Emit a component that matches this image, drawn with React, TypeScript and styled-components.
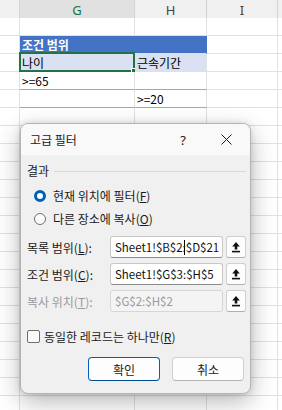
import React from 'react'
import styled, {createGlobalStyle} from 'styled-components'

const GlobalStyle = createGlobalStyle`
  html, body {
    margin: 0;
    padding: 0;
    background: #ffffff;
  }
  body {
    width: 282px;
    height: 410px;
    overflow: hidden;
    position: relative;
    font-family: "Noto Sans CJK KR", "Noto Sans", sans-serif;
  }
`

const HEADERS = ['', 'G', 'H', 'I', '']

type CellData = {
    text?: string
    bg?: string
    color?: string
    bold?: boolean
    line?: string
    span?: number
    selected?: boolean
}

// rows of the sheet, F..J, only the ones that hold something
const ROWS: CellData[][] = [
    [{}, {}, {}, {}, {}],
    [{}, {text: '조건 범위', bg: '#4472c4', color: '#ffffff', bold: true, span: 2}, {}, {}],
    [{}, {text: '나이', bg: '#d9e1f2', selected: true}, {text: '근속기간', bg: '#d9e1f2'}, {}, {}],
    [{}, {text: '>=65', line: '#8eaadb'}, {line: '#8eaadb'}, {}, {}],
    [{}, {line: '#8eaadb'}, {text: '>=20', line: '#8eaadb'}, {}, {}],
]

const EMPTY_ROWS = 17

const ArrowUpIcon = () => (
    <svg width="10" height="12" viewBox="0 0 10 12">
        <path d="M5 1 L1.2 5.4 H3.7 V8.6 H6.3 V5.4 H8.8 Z" fill="#111"/>
        <rect x="1" y="9.8" width="8" height="1.6" fill="#111"/>
    </svg>
)

const CloseIcon = () => (
    <svg width="11" height="11" viewBox="0 0 11 11">
        <path d="M0.5 0.5 L10.5 10.5 M10.5 0.5 L0.5 10.5" stroke="#1a1a1a" strokeWidth="1"/>
    </svg>
)

const RangeField = ({label, mnemonic, value, disabled, caret}: {
    label: string, mnemonic: string, value: string, disabled?: boolean, caret?: boolean
}) => {
    const cut = caret ? value.indexOf(':') : -1
    return (
        <FieldRow>
            <Label $disabled={disabled}>
                {label}(<u>{mnemonic}</u>):
            </Label>
            <Input $disabled={disabled}>
                {cut >= 0 ? (
                    <>
                        {value.slice(0, cut)}
                        <Caret/>
                        {value.slice(cut)}
                    </>
                ) : value}
            </Input>
            <PickButton>
                <ArrowUpIcon/>
            </PickButton>
        </FieldRow>
    )
}

const App = () => {
    return (
        <>
            <GlobalStyle/>
            <Sheet>
                {HEADERS.map((h, i) => (
                    <HeaderCell key={'h' + i} $active={h === 'G'}>{h}</HeaderCell>
                ))}
                {ROWS.map((row, r) =>
                    row.map((c, i) => (
                        <Cell
                            key={r + '-' + i}
                            $bg={c.bg}
                            $color={c.color}
                            $bold={c.bold}
                            $line={c.line}
                            $span={c.span || 1}
                        >
                            {c.text}
                            {c.selected && (
                                <Selection>
                                    <Handle/>
                                </Selection>
                            )}
                        </Cell>
                    ))
                )}
                {Array.from({length: EMPTY_ROWS * 5}).map((_, i) => (
                    <Cell key={'e' + i} $span={1}/>
                ))}
            </Sheet>

            <Dialog>
                <TitleBar>
                    <Title>고급 필터</Title>
                    <Help>?</Help>
                    <Close><CloseIcon/></Close>
                </TitleBar>
                <Body>
                    <GroupHead>
                        <span>결과</span>
                        <GroupLine/>
                    </GroupHead>
                    <RadioList>
                        <RadioRow>
                            <Radio $checked/>
                            <span>현재 위치에 필터(<u>F</u>)</span>
                        </RadioRow>
                        <RadioRow>
                            <Radio/>
                            <span>다른 장소에 복사(<u>O</u>)</span>
                        </RadioRow>
                    </RadioList>
                    <Fields>
                        <RangeField label="목록 범위" mnemonic="L" value="Sheet1!$B$2:$D$21" caret/>
                        <RangeField label="조건 범위" mnemonic="C" value="Sheet1!$G$3:$H$5"/>
                        <RangeField label="복사 위치" mnemonic="T" value="$G$2:$H$2" disabled/>
                    </Fields>
                    <CheckRow>
                        <CheckBox/>
                        <span>동일한 레코드는 하나만(<u>R</u>)</span>
                    </CheckRow>
                    <Footer>
                        <Button $primary>확인</Button>
                        <Button>취소</Button>
                    </Footer>
                </Body>
            </Dialog>
        </>
    )
}

const Sheet = styled.div`
  display: grid;
  grid-template-columns: 20px 115px 72px 71px 1fr;
  grid-auto-rows: 18px;
  width: 282px;
  height: 410px;
  overflow: hidden;
  font-family: "Noto Sans CJK KR", "Noto Sans", sans-serif;
`

const HeaderCell = styled.div<{ $active?: boolean }>`
  box-sizing: border-box;
  height: 23px;
  display: flex;
  align-items: center;
  justify-content: center;
  padding-bottom: 2px;
  font-family: "Noto Sans", "Noto Sans CJK KR", sans-serif;
  font-size: 13px;
  color: ${p => p.$active ? '#1e7145' : '#444444'};
  background: ${p => p.$active ? '#e1e1e1' : '#f0f0f0'};
  border-right: 1px solid #d4d4d4;
  border-bottom: ${p => p.$active ? '2px solid #217346' : '1px solid #d4d4d4'};
`

const Cell = styled.div<{ $bg?: string, $color?: string, $bold?: boolean, $line?: string, $span: number }>`
  position: relative;
  box-sizing: border-box;
  grid-column: span ${p => p.$span};
  height: 18px;
  display: flex;
  align-items: center;
  padding: 0 2px;
  font-size: 12px;
  line-height: 17px;
  white-space: nowrap;
  font-weight: ${p => p.$bold ? 700 : 400};
  color: ${p => p.$color || '#000000'};
  background: ${p => p.$bg || '#ffffff'};
  border-right: 1px solid ${p => p.$bg && p.$span > 1 ? p.$bg : '#e1e1e1'};
  border-bottom: 1px solid ${p => p.$line || '#e1e1e1'};
`

const Selection = styled.div`
  position: absolute;
  left: -1px;
  top: -2px;
  right: -1px;
  bottom: -1px;
  border: 2px solid #217346;
  pointer-events: none;
`

const Handle = styled.div`
  position: absolute;
  right: -5px;
  bottom: -5px;
  width: 5px;
  height: 5px;
  background: #217346;
  border: 1px solid #ffffff;
`

const Dialog = styled.div`
  position: absolute;
  left: 20px;
  top: 123px;
  width: 231px;
  height: 271px;
  box-sizing: border-box;
  display: flex;
  flex-direction: column;
  border: 1px solid #b4b4b4;
  border-radius: 8px;
  overflow: hidden;
  background: #f0f0f0;
  box-shadow: 0 8px 24px rgba(0, 0, 0, 0.28), 0 0 6px rgba(0, 0, 0, 0.12);
  font-size: 12px;
  color: #1a1a1a;
`

const TitleBar = styled.div`
  height: 31px;
  flex-shrink: 0;
  display: flex;
  align-items: center;
  padding-left: 9px;
  background: #f9f9f9;
`

const Title = styled.div`
  flex: 1;
  font-size: 12px;
`

const Help = styled.div`
  width: 12px;
  text-align: center;
  font-family: "Noto Sans", sans-serif;
  font-size: 13px;
  margin-right: 32px;
`

const Close = styled.div`
  width: 11px;
  height: 11px;
  display: flex;
  margin-right: 18px;
`

const Body = styled.div`
  flex: 1;
  padding: 8px 6px 0 6px;
  display: flex;
  flex-direction: column;
`

const GroupHead = styled.div`
  height: 16px;
  display: flex;
  align-items: center;
  gap: 5px;
  line-height: 16px;
`

const GroupLine = styled.div`
  flex: 1;
  height: 1px;
  margin-right: -2px;
  background: #d9d9d9;
`

const RadioList = styled.div`
  margin-top: 5px;
  padding-left: 7px;
  display: flex;
  flex-direction: column;
`

const RadioRow = styled.div`
  height: 23px;
  display: flex;
  align-items: center;
  gap: 7px;
`

const Radio = styled.div<{ $checked?: boolean }>`
  box-sizing: border-box;
  width: 12px;
  height: 12px;
  border-radius: 50%;
  background: ${p => p.$checked ? '#ffffff' : '#fbfbfb'};
  border: ${p => p.$checked ? '3.5px solid #005fb8' : '1px solid #707070'};
`

const Fields = styled.div`
  margin-top: 6px;
  display: flex;
  flex-direction: column;
  gap: 5px;
`

const FieldRow = styled.div`
  display: grid;
  grid-template-columns: 80px 113px 20px;
  column-gap: 3px;
  height: 22px;
  align-items: center;
`

const Label = styled.div<{ $disabled?: boolean }>`
  white-space: nowrap;
  color: ${p => p.$disabled ? '#9a9a9a' : '#1a1a1a'};
`

const Input = styled.div<{ $disabled?: boolean }>`
  box-sizing: border-box;
  height: 22px;
  padding: 0 4px;
  display: flex;
  align-items: center;
  overflow: hidden;
  white-space: nowrap;
  font-size: 11.5px;
  border-radius: 3px;
  color: ${p => p.$disabled ? '#9a9a9a' : '#111111'};
  background: ${p => p.$disabled ? '#f4f4f4' : '#ffffff'};
  border: 1px solid ${p => p.$disabled ? '#d6d6d6' : '#c8c8c8'};
  border-bottom-color: ${p => p.$disabled ? '#d6d6d6' : '#8a8a8a'};
`

const Caret = styled.span`
  display: inline-block;
  width: 0;
  height: 15px;
  border-left: 1px solid #000000;
  margin-left: 1px;
  margin-right: -2px;
`

const PickButton = styled.div`
  box-sizing: border-box;
  height: 22px;
  display: flex;
  align-items: center;
  justify-content: center;
  border: 1px solid #d0d0d0;
  border-bottom-color: #b0b0b0;
  border-radius: 3px;
  background: #fdfdfd;
`

const CheckRow = styled.div`
  margin-top: 16px;
  height: 16px;
  display: flex;
  align-items: center;
  gap: 4px;
`

const CheckBox = styled.div`
  box-sizing: border-box;
  width: 13px;
  height: 13px;
  border: 1px solid #6e6e6e;
  border-radius: 2px;
  background: #fbfbfb;
`

const Footer = styled.div`
  margin-top: 13px;
  display: flex;
  justify-content: flex-end;
  gap: 12px;
`

const Button = styled.div<{ $primary?: boolean }>`
  box-sizing: border-box;
  width: 72px;
  height: 24px;
  display: flex;
  align-items: center;
  justify-content: center;
  border-radius: 4px;
  background: #fdfdfd;
  border: 1px solid ${p => p.$primary ? '#005fb8' : '#d0d0d0'};
  border-bottom-color: ${p => p.$primary ? '#004a8f' : '#b5b5b5'};
`

export default App
